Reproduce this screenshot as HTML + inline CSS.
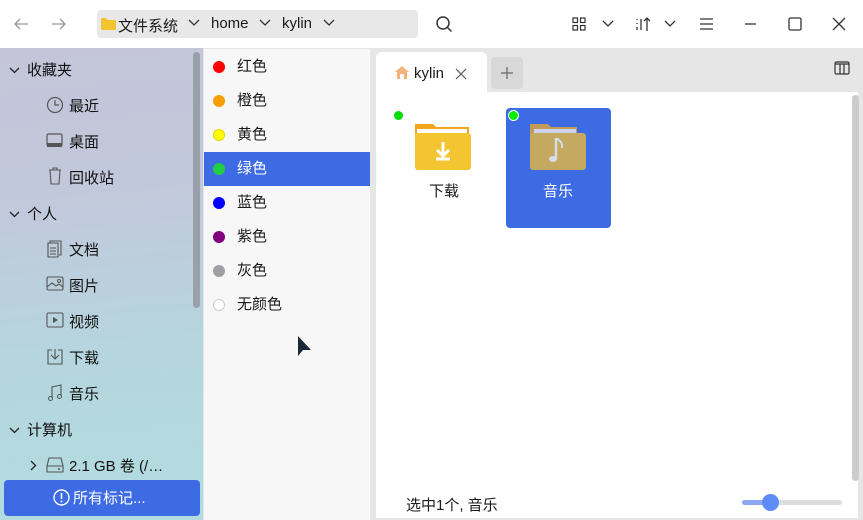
<!DOCTYPE html>
<html><head><meta charset="utf-8"><style>
*{margin:0;padding:0;box-sizing:border-box}
body{width:863px;height:520px;overflow:hidden;font-family:"Liberation Sans","Noto Sans CJK SC",sans-serif;font-size:15px;color:#1a1a1a;background:#e6e6e6;position:relative}
.a{position:absolute}
svg{position:absolute}
.side{left:0;top:48px;width:203px;height:472px;background:linear-gradient(175deg,#c4c5d9 0%,#c2c8db 30%,#b5d6de 65%,#b2dce0 100%)}
.si{position:absolute;font-size:15px;color:#111;margin-top:-2px}
.tags{left:204px;top:49px;width:166px;height:471px;background:#f7f7f7}
.tg{position:absolute;left:0;width:166px;height:34px;line-height:34px;padding-left:33px;font-size:15px}
.dot{position:absolute;left:9px;top:11px;width:12px;height:12px;border-radius:50%}
</style></head><body>
<div class="a" style="left:0;top:0;width:863px;height:48px;background:#fff"></div>
<svg style="left:12px;top:15px" width="18" height="18" viewBox="0 0 18 18"><path d="M16 9H3M8 4L3 9l5 5" stroke="#999" stroke-width="1.3" fill="none"/></svg>
<svg style="left:50px;top:15px" width="18" height="18" viewBox="0 0 18 18"><path d="M2 9h13M10 4l5 5-5 5" stroke="#999" stroke-width="1.3" fill="none"/></svg>
<div class="a" style="left:97px;top:10px;width:321px;height:28px;background:#e8e8e8;border-radius:4px"></div>
<svg style="left:101px;top:17px" width="15" height="13" viewBox="0 0 15 13"><path d="M0 1h5l2 2h8v10H0z" fill="#f4c430"/></svg>
<div class="a" style="left:118px;top:15px;font-size:15px">文件系统</div>
<svg style="left:188px;top:19px" width="12" height="8"><path d="M1 1l5 5 5-5" stroke="#333" stroke-width="1.3" fill="none"/></svg>
<div class="a" style="left:211px;top:15px;font-size:15px">home</div>
<svg style="left:259px;top:19px" width="12" height="8"><path d="M1 1l5 5 5-5" stroke="#333" stroke-width="1.3" fill="none"/></svg>
<div class="a" style="left:282px;top:15px;font-size:15px">kylin</div>
<svg style="left:323px;top:19px" width="12" height="8"><path d="M1 1l5 5 5-5" stroke="#333" stroke-width="1.3" fill="none"/></svg>
<svg style="left:435px;top:15px" width="18" height="18"><circle cx="8" cy="8" r="6" stroke="#333" stroke-width="1.5" fill="none"/><path d="M12.5 12.5l4 4" stroke="#333" stroke-width="1.5"/></svg>
<svg style="left:572px;top:17px" width="14" height="14"><g fill="none" stroke="#333" stroke-width="1.2"><rect x="1" y="1" width="4.5" height="4.5"/><rect x="8.5" y="1" width="4.5" height="4.5"/><rect x="1" y="8.5" width="4.5" height="4.5"/><rect x="8.5" y="8.5" width="4.5" height="4.5"/></g></svg>
<svg style="left:602px;top:20px" width="12" height="8"><path d="M1 1l5 5 5-5" stroke="#333" stroke-width="1.3" fill="none"/></svg>
<svg style="left:635px;top:16px" width="16" height="16"><path d="M2 3v1M2 7v1M2 11v3M6 3v11M12 2v13M9 5l3-3 3 3" stroke="#333" stroke-width="1.3" fill="none"/></svg>
<svg style="left:664px;top:20px" width="12" height="8"><path d="M1 1l5 5 5-5" stroke="#333" stroke-width="1.3" fill="none"/></svg>
<svg style="left:700px;top:18px" width="13" height="12"><path d="M0 1h13M0 6h13M0 11h13" stroke="#333" stroke-width="1.2"/></svg>
<svg style="left:745px;top:23px" width="12" height="2"><path d="M0 1h11" stroke="#333" stroke-width="1.3"/></svg>
<svg style="left:788px;top:17px" width="14" height="14"><rect x="1" y="1" width="12" height="12" rx="1.5" stroke="#333" stroke-width="1.3" fill="none"/></svg>
<svg style="left:832px;top:17px" width="14" height="14"><path d="M1 1l12 12M13 1L1 13" stroke="#333" stroke-width="1.3"/></svg>

<div class="a side"></div>
<div class="a" style="left:193px;top:52px;width:7px;height:256px;background:#9aa0aa;border-radius:4px"></div>
<svg style="left:9px;top:67px" width="11" height="7"><path d="M1 1l4.5 4.5L10 1" stroke="#222" stroke-width="1.3" fill="none"/></svg>
<div class="si" style="left:27px;top:61px">收藏夹</div>
<svg style="left:46px;top:96px" width="18" height="18"><circle cx="9" cy="9" r="7.5" stroke="#555" stroke-width="1.2" fill="none"/><path d="M9 4v5h4" stroke="#555" stroke-width="1.2" fill="none"/></svg>
<div class="si" style="left:69px;top:97px">最近</div>
<svg style="left:46px;top:133px" width="18" height="16"><rect x="1" y="1" width="15" height="12" rx="1.5" stroke="#555" stroke-width="1.2" fill="none"/><rect x="1" y="10" width="15" height="4" fill="#555"/></svg>
<div class="si" style="left:69px;top:133px">桌面</div>
<svg style="left:48px;top:167px" width="14" height="18"><path d="M1 3h12M5 3V1h4v2M2 3l1 14h8l1-14" stroke="#555" stroke-width="1.1" fill="none"/></svg>
<div class="si" style="left:69px;top:169px">回收站</div>
<svg style="left:9px;top:211px" width="11" height="7"><path d="M1 1l4.5 4.5L10 1" stroke="#222" stroke-width="1.3" fill="none"/></svg>
<div class="si" style="left:27px;top:205px">个人</div>
<svg style="left:47px;top:240px" width="16" height="18"><path d="M3 3V1h11v14h-2M1 3h10v14H1z M3 8h6M3 11h6M3 14h6" stroke="#555" stroke-width="1.1" fill="none"/></svg>
<div class="si" style="left:69px;top:241px">文档</div>
<svg style="left:46px;top:276px" width="18" height="16"><rect x="1" y="1" width="16" height="13" rx="1.5" stroke="#555" stroke-width="1.1" fill="none"/><path d="M1 11l5-4 4 3 3-2 4 3" stroke="#555" stroke-width="1.1" fill="none"/><circle cx="13" cy="5" r="1.5" stroke="#555" fill="none"/></svg>
<div class="si" style="left:69px;top:277px">图片</div>
<svg style="left:46px;top:312px" width="18" height="16"><rect x="1" y="1" width="16" height="14" rx="1.5" stroke="#555" stroke-width="1.1" fill="none"/><path d="M7 5l5 3-5 3z" fill="#555"/></svg>
<div class="si" style="left:69px;top:313px">视频</div>
<svg style="left:47px;top:348px" width="16" height="18"><path d="M5 2H1v14h14V2h-4M8 1v10M4 7l4 4 4-4" stroke="#555" stroke-width="1.1" fill="none"/></svg>
<div class="si" style="left:69px;top:349px">下载</div>
<svg style="left:47px;top:384px" width="16" height="18"><path d="M5 14V3l9-2v11" stroke="#555" stroke-width="1.1" fill="none"/><circle cx="3.5" cy="14.5" r="2" stroke="#555" fill="none"/><circle cx="12.5" cy="12.5" r="2" stroke="#555" fill="none"/></svg>
<div class="si" style="left:69px;top:385px">音乐</div>
<svg style="left:9px;top:427px" width="11" height="7"><path d="M1 1l4.5 4.5L10 1" stroke="#222" stroke-width="1.3" fill="none"/></svg>
<div class="si" style="left:27px;top:421px">计算机</div>
<svg style="left:30px;top:460px" width="7" height="11"><path d="M1 1l4.5 4.5L1 10" stroke="#222" stroke-width="1.3" fill="none"/></svg>
<svg style="left:46px;top:457px" width="18" height="16"><path d="M3 1h12l2 8v6H1V9z M1 9h16" stroke="#555" stroke-width="1.1" fill="none"/><circle cx="13" cy="12" r="1" fill="#555"/></svg>
<div class="si" style="left:69px;top:457px">2.1 GB 卷 (/…</div>
<div class="a" style="left:4px;top:480px;width:196px;height:36px;background:#3d6be3;border-radius:4px"></div>
<svg style="left:53px;top:489px" width="17" height="17"><circle cx="8.5" cy="8.5" r="7.5" stroke="#fff" stroke-width="1.4" fill="none"/><path d="M8.5 4v6" stroke="#fff" stroke-width="1.6"/><circle cx="8.5" cy="12.5" r="1" fill="#fff"/></svg>
<div class="si" style="left:73px;top:489px;color:#fff">所有标记...</div>

<div class="a tags">
<div class="tg" style="top:1px"><span class="dot" style="background:#f00"></span>红色</div>
<div class="tg" style="top:35px"><span class="dot" style="background:#f5a000"></span>橙色</div>
<div class="tg" style="top:69px"><span class="dot" style="background:#ff0;border:1px solid #e0d800"></span>黄色</div>
<div class="tg" style="top:103px;background:#3d6be3;color:#fff"><span class="dot" style="background:#22cc44"></span>绿色</div>
<div class="tg" style="top:137px"><span class="dot" style="background:#0000ff"></span>蓝色</div>
<div class="tg" style="top:171px"><span class="dot" style="background:#800080"></span>紫色</div>
<div class="tg" style="top:205px"><span class="dot" style="background:#a0a0a4"></span>灰色</div>
<div class="tg" style="top:239px"><span class="dot" style="background:#fff;border:1px solid #ccc"></span>无颜色</div>
</div>
<svg style="left:297px;top:335px" width="16" height="22"><path d="M1 1v20l5-6h8z" fill="#1b2838"/></svg>

<div class="a" style="left:376px;top:52px;width:111px;height:44px;background:#fff;border-radius:6px 6px 0 0"></div>
<svg style="left:394px;top:65px" width="16" height="15"><path d="M8 1L1 7h2v7h10V7h2z" fill="#f5b27a"/><rect x="6" y="9" width="4" height="5" fill="#fff"/></svg>
<div class="a" style="left:414px;top:65px;font-size:15px">kylin</div>
<svg style="left:455px;top:68px" width="12" height="12"><path d="M1 1l10 10M11 1L1 11" stroke="#555" stroke-width="1.2"/></svg>
<div class="a" style="left:491px;top:57px;width:32px;height:32px;background:#d8d8d8;border-radius:4px"></div>
<svg style="left:500px;top:66px" width="14" height="14"><path d="M7 1v12M1 7h12" stroke="#666" stroke-width="1.2"/></svg>
<svg style="left:834px;top:61px" width="16" height="14"><rect x="1" y="1" width="14" height="12" rx="1.5" stroke="#333" stroke-width="1.2" fill="none"/><path d="M1 3h14M6 3v10M10 3v10" stroke="#333" stroke-width="1.2"/></svg>
<div class="a" style="left:376px;top:92px;width:482px;height:426px;background:#fff"></div>
<div class="a" style="left:852px;top:95px;width:7px;height:386px;background:#ccc;border-radius:4px"></div>

<div class="a" style="left:394px;top:111px;width:9px;height:9px;border-radius:50%;background:#0d0"></div>
<svg style="left:414px;top:122px" width="58" height="48"><path d="M1 2h18l3 3h33v8H1z" fill="#f2a51c"/><rect x="3" y="7" width="50" height="6" fill="#fff"/><rect x="1" y="11" width="56" height="37" rx="3" fill="#f3c531"/><path d="M29 20v13M23 28l6 6 6-6M22 37h14" stroke="#fff" stroke-width="3" fill="none"/></svg>
<div class="a" style="left:429px;top:180px;font-size:15px">下载</div>
<div class="a" style="left:506px;top:108px;width:105px;height:120px;background:#3d6be3;border-radius:4px"></div>
<div class="a" style="left:508px;top:110px;width:11px;height:11px;border-radius:50%;background:#0e0;border:1px solid #fff"></div>
<svg style="left:530px;top:122px" width="58" height="48"><path d="M0 2h18l3 3h26v8H0z" fill="#c39a55"/><rect x="4" y="7" width="42" height="6" fill="#ccd3ea"/><rect x="0" y="11" width="56" height="37" rx="3" fill="#c4a960"/><path d="M26 16v21" stroke="#d8dbe8" stroke-width="2.5"/><ellipse cx="23" cy="37" rx="4" ry="3" fill="#d8dbe8"/><path d="M27 16c2 3 6 4 5 10" stroke="#d8dbe8" stroke-width="2" fill="none"/></svg>
<div class="a" style="left:543px;top:180px;font-size:15px;color:#fff">音乐</div>

<div class="a" style="left:406px;top:494px;font-size:15px">选中1个, 音乐</div>
<div class="a" style="left:742px;top:500px;width:100px;height:5px;background:#ddd;border-radius:3px"></div>
<div class="a" style="left:742px;top:500px;width:28px;height:5px;background:#8fa8f5;border-radius:3px"></div>
<div class="a" style="left:762px;top:494px;width:17px;height:17px;background:#5d8bf8;border-radius:50%"></div>
</body></html>
